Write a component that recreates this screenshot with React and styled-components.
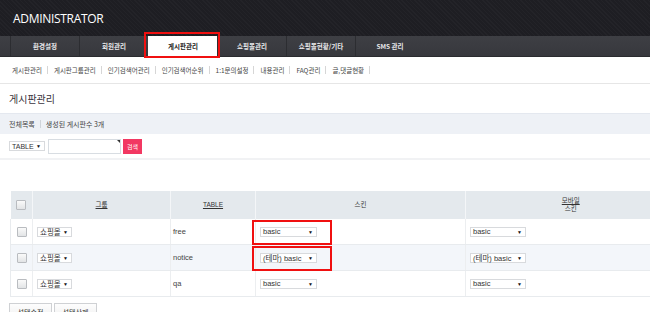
import styled, { createGlobalStyle } from 'styled-components';

const GlobalStyle = createGlobalStyle`
  html, body {
    margin: 0;
    padding: 0;
    background: #fff;
  }
  body {
    font-family: "Liberation Sans", "Noto Sans CJK KR", sans-serif;
    color: #333;
  }
`;

const tabs = ['환경설정', '회원관리', '게시판관리', '쇼핑몰관리', '쇼핑몰현황/기타', 'SMS 관리'];
const subMenu = ['게시판관리', '게시판그룹관리', '인기검색어관리', '인기검색어순위', '1:1문의설정', '내용관리', 'FAQ관리', '글,댓글현황'];

const rows = [
  { group: '쇼핑몰', table: 'free', skin: 'basic', mobile: 'basic', marked: true },
  { group: '쇼핑몰', table: 'notice', skin: '(테마) basic', mobile: '(테마) basic', marked: true },
  { group: '쇼핑몰', table: 'qa', skin: 'basic', mobile: 'basic' },
];

const App = () => {
  return (
    <>
      <GlobalStyle />
      <Page>
        <Header>
          <Logo>ADMINISTRATOR</Logo>
        </Header>
        <Nav>
          {tabs.map((t, i) => (
            <Tab key={t} $active={i === 2}>{t}</Tab>
          ))}
        </Nav>
        <SubNav>
          {subMenu.map((s) => (
            <SubItem key={s}>{s}</SubItem>
          ))}
        </SubNav>
        <Title>게시판관리</Title>
        <InfoBar>
          <span>전체목록</span>
          <InfoSep />
          <span>생성된 게시판수 3개</span>
        </InfoBar>
        <SearchRow>
          <Select $w={36} $size={7}>TABLE<Arrow>▼</Arrow></Select>
          <SearchInput />
          <SearchButton>검색</SearchButton>
        </SearchRow>
        <TableWrap>
          <Table>
            <colgroup>
              <col style={{ width: 22 }} />
              <col style={{ width: 138 }} />
              <col style={{ width: 85 }} />
              <col style={{ width: 210 }} />
              <col style={{ width: 210 }} />
            </colgroup>
            <thead>
              <tr>
                <Th><Check /></Th>
                <Th><u>그룹</u></Th>
                <Th><u>TABLE</u></Th>
                <Th>스킨</Th>
                <Th><u>모바일</u><br />스킨</Th>
              </tr>
            </thead>
            <tbody>
              {rows.map((r, i) => (
                <Tr key={r.table} $alt={i % 2 === 1}>
                  <Td $center><Check /></Td>
                  <Td><Select $w={35}>{r.group}<Arrow>▼</Arrow></Select></Td>
                  <Td $text>{r.table}</Td>
                  <Td>
                    <Marked $on={r.marked}>
                      <Select $w={57}>{r.skin}<Arrow>▼</Arrow></Select>
                    </Marked>
                  </Td>
                  <Td><Select $w={56}>{r.mobile}<Arrow>▼</Arrow></Select></Td>
                </Tr>
              ))}
            </tbody>
          </Table>
        </TableWrap>
        <Buttons>
          <Button>선택수정</Button>
          <Button>선택삭제</Button>
        </Buttons>
      </Page>
    </>
  );
};

const Page = styled.div`
  width: 650px;
  height: 312px;
  overflow: hidden;
`;

const Header = styled.div`
  height: 36px;
  display: flex;
  align-items: center;
  padding-left: 13px;
  background-color: #1e1e23;
  background-image: repeating-linear-gradient(45deg, rgba(255,255,255,0.025) 0 1px, transparent 1px 3px);
`;

const Logo = styled.div`
  font-family: "Open Sans", "Liberation Sans", sans-serif;
  font-size: 12px;
  letter-spacing: -0.3px;
  color: #fff;
  margin-top: 1px;
`;

const Nav = styled.div`
  height: 20px;
  display: flex;
  padding-left: 10px;
  background: linear-gradient(#3e3f44, #37383d);
  border-bottom: 1px solid #2a2b2f;
`;

const Tab = styled.div`
  position: relative;
  width: 69px;
  box-sizing: border-box;
  display: flex;
  align-items: center;
  justify-content: center;
  font-family: "Noto Sans CJK KR", sans-serif;
  font-size: 6.5px;
  font-weight: 700;
  color: ${(p) => (p.$active ? '#222' : '#e8e8ea')};
  background: ${(p) => (p.$active ? '#fff' : 'transparent')};
  border-left: 1px solid ${(p) => (p.$active ? '#fff' : '#2c2d31')};

  ${(p) => p.$active && `
    &::after {
      content: '';
      position: absolute;
      top: -4px;
      bottom: -2px;
      left: -5px;
      right: -3px;
      border: 2px solid #f01010;
    }
  `}
`;

const SubNav = styled.div`
  height: 26px;
  display: flex;
  align-items: center;
  padding-left: 6px;
  border-bottom: 1px solid #e6e6e6;
`;

const SubItem = styled.div`
  font-family: "Noto Sans CJK KR", sans-serif;
  font-size: 6.5px;
  color: #444;
  padding: 0 5px 0 6px;
  border-right: 1px solid #d6d6d6;
  line-height: 8px;
`;

const Title = styled.div`
  height: 29px;
  display: flex;
  align-items: center;
  padding-left: 9px;
  font-family: "Noto Sans CJK KR", sans-serif;
  font-size: 10px;
  color: #3a3540;
`;

const InfoBar = styled.div`
  height: 20px;
  display: flex;
  align-items: center;
  padding-left: 9px;
  gap: 5px;
  background: #eef1f6;
  border-top: 1px solid #e4e8ef;
  font-family: "Noto Sans CJK KR", sans-serif;
  font-size: 7px;
  color: #444;
`;

const InfoSep = styled.span`
  width: 1px;
  height: 8px;
  background: #cfd4da;
`;

const SearchRow = styled.div`
  height: 24px;
  display: flex;
  align-items: center;
  padding-left: 9px;
  border-bottom: 2px solid #f1f2f4;
`;

const Select = styled.span`
  width: ${(p) => p.$w}px;
  height: 10px;
  box-sizing: border-box;
  display: inline-flex;
  align-items: center;
  justify-content: space-between;
  gap: 2px;
  padding: 0 3px 0 2px;
  background: #fff;
  border: 1px solid #d8dadd;
  font-family: "Liberation Sans", "Noto Sans CJK KR", sans-serif;
  font-size: ${(p) => p.$size || 7.5}px;
  color: #333;
  white-space: nowrap;
  vertical-align: middle;
`;

const Arrow = styled.span`
  font-size: 5px;
  color: #111;
`;

const SearchInput = styled.span`
  position: relative;
  width: 73px;
  height: 15px;
  box-sizing: border-box;
  margin-left: 3px;
  border: 1px solid #d8dde2;
  background: #fff;

  &::after {
    content: '';
    position: absolute;
    top: 0;
    right: 0;
    border-top: 3px solid #333;
    border-left: 3px solid transparent;
  }
`;

const SearchButton = styled.span`
  width: 19px;
  height: 15px;
  margin-left: 2px;
  display: flex;
  align-items: center;
  justify-content: center;
  background: #f23862;
  color: #fff;
  font-family: "Noto Sans CJK KR", sans-serif;
  font-size: 6px;
`;

const TableWrap = styled.div`
  margin: 31px 0 0 10px;
  width: 665px;
`;

const Table = styled.table`
  width: 665px;
  border-collapse: collapse;
  table-layout: fixed;
`;

const Th = styled.th`
  height: 28px;
  padding: 0;
  background: #e4e9ed;
  border-left: 1px solid #f4f6f8;
  font-family: "Liberation Sans", "Noto Sans CJK KR", sans-serif;
  font-size: 6.5px;
  font-weight: 400;
  line-height: 8px;
  color: #333;
  text-align: center;

  &:first-child {
    border-left: none;
  }
`;

const Tr = styled.tr`
  background: ${(p) => (p.$alt ? '#f3f6fa' : '#fff')};
`;

const Td = styled.td`
  height: 25px;
  padding: ${(p) => (p.$text ? '0 0 0 2px' : '0 0 0 4px')};
  border-left: 1px solid #eceef0;
  border-bottom: 1px solid #e8ebee;
  font-family: "Liberation Sans", "Noto Sans CJK KR", sans-serif;
  font-size: 7.5px;
  color: #444;
  text-align: ${(p) => (p.$center ? 'center' : 'left')};

  &:first-child {
    border-left: 1px solid #e8ebee;
    padding: 0;
  }
`;

const Check = styled.span`
  display: inline-block;
  width: 8px;
  height: 8px;
  border: 1px solid #b9bcc0;
  border-radius: 1px;
  background: linear-gradient(#fafafa, #e2e4e6);
  vertical-align: middle;
`;

const Marked = styled.span`
  position: relative;
  display: inline-block;

  ${(p) => p.$on && `
    &::after {
      content: '';
      position: absolute;
      top: -6px;
      bottom: -8px;
      left: -8px;
      right: -15px;
      border: 2px solid #f01010;
    }
  `}
`;

const Buttons = styled.div`
  display: flex;
  gap: 2px;
  margin: 6px 0 0 9px;
`;

const Button = styled.div`
  width: 43px;
  height: 17px;
  box-sizing: border-box;
  display: flex;
  align-items: center;
  justify-content: center;
  border: 1px solid #cfd1d4;
  background: linear-gradient(#fdfdfd, #f0f0f0);
  font-family: "Noto Sans CJK KR", sans-serif;
  font-size: 7px;
  color: #333;
`;

export default App;
